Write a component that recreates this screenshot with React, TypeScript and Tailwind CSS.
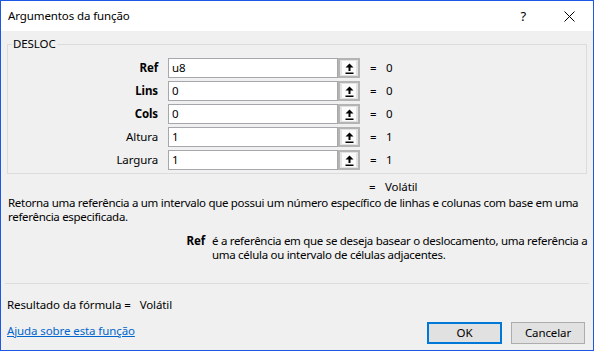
import React from 'react';

interface Arg {
  label: string;
  value: string;
  result: string;
  required: boolean;
}

const args: Arg[] = [
  { label: 'Ref', value: 'u8', result: '0', required: true },
  { label: 'Lins', value: '0', result: '0', required: true },
  { label: 'Cols', value: '0', result: '0', required: true },
  { label: 'Altura', value: '1', result: '1', required: false },
  { label: 'Largura', value: '1', result: '1', required: false },
];

// the little "collapse dialog" arrow next to each input
const CollapseIcon = () => (
  <svg width="9" height="11" viewBox="0 0 9 11">
    <path d="M4.5 0.5 L8.5 4.5 L0.5 4.5 Z" fill="#000" />
    <rect x="3.5" y="4" width="2" height="4" fill="#000" />
    <rect x="0.5" y="9.5" width="8" height="1.5" fill="#000" />
  </svg>
);

const ArgRow: React.FC<{ arg: Arg }> = ({ arg }) => (
  <div className="flex items-center h-[20px]">
    <span
      className={
        arg.required
          ? 'w-[151px] pr-[1px] text-right font-bold'
          : 'w-[151px] pr-[1px] text-right'
      }
    >
      {arg.label}
    </span>
    <div className="ml-[9px] w-[170px] h-[20px] bg-white border border-[#a5a7ad] flex items-center pl-[3px]">
      {arg.value}
    </div>
    <button className="w-[22px] h-[20px] border-2 border-[#b4b4b4] bg-[#e3e3e3] flex items-center justify-center">
      <span className="bg-[#fbfbfb] w-[14px] h-[14px] flex items-center justify-center">
        <CollapseIcon />
      </span>
    </button>
    <span className="ml-[10px] w-[16px]">=</span>
    <span>{arg.result}</span>
  </div>
);

export default function App() {
  return (
    <div className="w-[594px] h-[351px] flex flex-col border border-[#1c58e6] bg-[#f0f0f0] text-[11.5px] tracking-[-0.1px] leading-[16px] text-black font-['Noto_Sans',sans-serif] overflow-hidden">
      <div className="h-[30px] shrink-0 bg-white flex items-center pl-[7px]">
        <span>Argumentos da função</span>
        <span className="ml-auto text-[13px]">?</span>
        <svg className="ml-[38px] mr-[18px]" width="11" height="11" viewBox="0 0 11 11">
          <path d="M0.5 0.5 L10.5 10.5 M10.5 0.5 L0.5 10.5" stroke="#000" strokeWidth="1" />
        </svg>
      </div>

      <fieldset className="mx-[6px] mt-[5px] border border-[#dcdcdc] px-0 pt-[6px] pb-[3px] flex flex-col gap-[3px]">
        <legend className="ml-[4px] px-[1px]">DESLOC</legend>
        {args.map((a) => (
          <ArgRow key={a.label} arg={a} />
        ))}
      </fieldset>

      <div className="flex mt-[5px] pl-[368px]">
        <span className="w-[16px]">=</span>
        <span>Volátil</span>
      </div>

      <p className="px-[7px] mt-[1px] leading-[14px] tracking-[-0.3px] whitespace-nowrap">
        Retorna uma referência a um intervalo que possui um número específico de linhas e colunas com base em uma
        <br />
        referência especificada.
      </p>

      <div className="flex mt-[10px] leading-[14px] tracking-[-0.3px]">
        <span className="w-[204px] text-right font-bold tracking-[-0.1px]">Ref</span>
        <span className="ml-[7px] whitespace-nowrap">
          é a referência em que se deseja basear o deslocamento, uma referência a
          <br />
          uma célula ou intervalo de células adjacentes.
        </span>
      </div>

      <div className="mt-[21px] mx-[4px] border-t border-[#dcdcdc]" />

      <div className="flex px-[6px] pt-[13px]">
        <span>Resultado da fórmula =</span>
        <span className="ml-[9px]">Volátil</span>
      </div>

      <div className="mt-auto flex items-end px-[6px] pb-[6px]">
        <a href="#" className="text-[#0066cc] underline mb-[5px]">
          Ajuda sobre esta função
        </a>
        <button className="ml-auto w-[75px] h-[22px] border-2 border-[#0078d7] bg-[#e1e1e1]">OK</button>
        <button className="ml-[9px] mr-[2px] w-[74px] h-[22px] border border-[#adadad] bg-[#e1e1e1]">
          Cancelar
        </button>
      </div>
    </div>
  );
}
